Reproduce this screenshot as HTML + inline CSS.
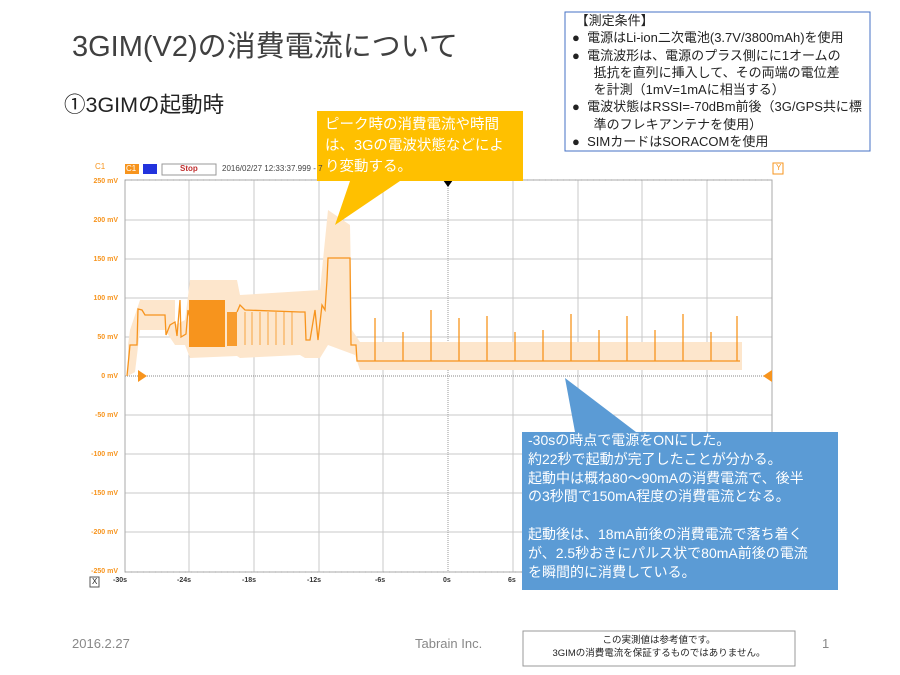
<!DOCTYPE html>
<html><head><meta charset="utf-8">
<style>
body{margin:0;width:900px;height:675px;background:#fff;position:relative;overflow:hidden;font-family:"Liberation Sans","Noto Sans CJK JP",sans-serif;}
.a{position:absolute;white-space:nowrap;}
svg{position:absolute;left:0;top:0;}
</style></head><body>
<svg width="900" height="675" viewBox="0 0 900 675">
  <g stroke="#c8c8c8" stroke-width="1">
    <line x1="189" y1="180" x2="189" y2="572"/><line x1="254" y1="180" x2="254" y2="572"/>
    <line x1="319" y1="180" x2="319" y2="572"/><line x1="383" y1="180" x2="383" y2="572"/>
    <line x1="513" y1="180" x2="513" y2="572"/><line x1="578" y1="180" x2="578" y2="572"/>
    <line x1="642" y1="180" x2="642" y2="572"/><line x1="707" y1="180" x2="707" y2="572"/>
    <line x1="125" y1="220" x2="772" y2="220"/><line x1="125" y1="259" x2="772" y2="259"/>
    <line x1="125" y1="298" x2="772" y2="298"/><line x1="125" y1="337" x2="772" y2="337"/>
    <line x1="125" y1="415" x2="772" y2="415"/><line x1="125" y1="454" x2="772" y2="454"/>
    <line x1="125" y1="493" x2="772" y2="493"/><line x1="125" y1="532" x2="772" y2="532"/>
  </g>
  <line x1="448" y1="180" x2="448" y2="572" stroke="#999" stroke-dasharray="1,1"/>
  <line x1="125" y1="376" x2="772" y2="376" stroke="#888" stroke-dasharray="1,1"/>
  <rect x="125" y="180" width="647" height="392" fill="none" stroke="#aaa"/>
  <g stroke="#999"><path d="M125 572 H772 M125 180 H772" stroke-dasharray="1,5"/></g>
  <path d="M128 345 L130 330 L140 300 L175 300 L175 325 L185 320 L190 280 L237 280 L240 295 L320 290 L328 210 L350 225 L352 330 L360 342 L742 342 L742 370 L360 370 L355 355 L328 345 L320 358 L305 358 L300 355 L240 358 L237 356 L190 358 L185 345 L175 345 L165 330 L140 330 L135 372 L128 376 Z" fill="#fde6cc"/>
  <path d="M127 376 L130 345 L137 345 L138 309 L142 310 L145 315 L165 315 L166 335 L170 325 L175 322 L177 336 L180 300 L181 337 L186 334 L188 310 L190 318 M237 312 L240 305 L245 310 L300 312 L305 312 L306 340 L310 340 L315 310 L318 340 L322 305 L325 310 L327 280 L328 258 L350 258 L351 345 L356 345 L357 361 L740 361" fill="none" stroke="#f7941d" stroke-width="1.3"/>
  <rect x="189" y="300" width="36" height="47" fill="#f7941d"/>
  <rect x="227" y="312" width="10" height="34" fill="#f7941d" opacity=".9"/>
  <g stroke="#f7941d" stroke-width="1" opacity=".8">
    <path d="M245 312V345M252 312V345M260 312V345M268 312V345M276 312V345M284 312V345M292 312V345"/>
  </g>
  <g stroke="#f7941d" stroke-width="1.3">
    <path d="M375 361V318 M403 361V332 M431 361V310 M459 361V318 M487 361V316 M515 361V332 M543 361V330 M571 361V314 M599 361V330 M627 361V316 M655 361V330 M683 361V314 M711 361V332 M737 361V316"/>
  </g>
  <path d="M138 370 L147 376 L138 382 Z" fill="#f7941d"/>
  <path d="M772 370 L763 376 L772 382 Z" fill="#f7941d"/>
  <path d="M443 180 L453 180 L448 187 Z" fill="#000"/>
  <rect x="125" y="164" width="14" height="10" fill="#f7941d"/>
  <rect x="143" y="164" width="14" height="10" fill="#2233dd"/>
  <rect x="162" y="164" width="54" height="11" fill="#fff" stroke="#999"/>
  <rect x="773" y="163" width="10" height="11" fill="#fff" stroke="#f7941d"/>
  <path d="M317 111 H523 V181 H400 L335 225 L350 181 H317 Z" fill="#ffc000"/>
  <path d="M522 432 H838 V590 H522 Z M575 432 L565 378 L636 432 Z" fill="#5b9bd5"/>
  <rect x="565" y="12" width="305" height="139" fill="#fff" stroke="#4472c4"/>
  <rect x="523" y="631" width="272" height="35" fill="#fff" stroke="#999"/>
  <rect x="90" y="577" width="9" height="10" fill="#fff" stroke="#555"/>
</svg>
<div class="a" style="left:72px;top:23px;font-size:29px;color:#404040;">3GIM(V2)の消費電流について</div>
<div class="a" style="left:64px;top:88px;font-size:21.5px;color:#222;">①3GIMの起動時</div>
<div class="a" style="left:325px;top:115px;font-size:14.5px;line-height:21px;color:#fff;">ピーク時の消費電流や時間<br>は、3Gの電波状態などによ<br>り変動する。</div>
<div class="a" style="left:528px;top:431px;font-size:14px;line-height:18.8px;color:#fff;">-30sの時点で電源をONにした。<br>約22秒で起動が完了したことが分かる。<br>起動中は概ね80～90mAの消費電流で、後半<br>の3秒間で150mA程度の消費電流となる。<br><br>起動後は、18mA前後の消費電流で落ち着く<br>が、2.5秒おきにパルス状で80mA前後の電流<br>を瞬間的に消費している。</div>
<div class="a" style="left:572px;top:12px;font-size:13px;line-height:17.3px;color:#222;">&nbsp;【測定条件】<br>●&nbsp; 電源はLi-ion二次電池(3.7V/3800mAh)を使用<br>●&nbsp; 電流波形は、電源のプラス側にに1オームの<br>&nbsp;&nbsp;&nbsp;&nbsp;&nbsp; 抵抗を直列に挿入して、その両端の電位差<br>&nbsp;&nbsp;&nbsp;&nbsp;&nbsp; を計測（1mV=1mAに相当する）<br>●&nbsp; 電波状態はRSSI=-70dBm前後（3G/GPS共に標<br>&nbsp;&nbsp;&nbsp;&nbsp;&nbsp; 準のフレキアンテナを使用）<br>●&nbsp; SIMカードはSORACOMを使用</div>
<div class="a" style="left:95px;top:162px;font-size:8px;color:#f7941d;">C1</div>
<div class="a" style="left:126px;top:164px;font-size:8px;color:#fff;">C1</div>
<div class="a" style="left:180px;top:164px;font-size:8px;color:#c03030;font-weight:bold;">Stop</div>
<div class="a" style="left:222px;top:164px;font-size:8px;color:#444;">2016/02/27 12:33:37.999 - 7</div>
<div class="a" style="left:776px;top:163px;font-size:8px;color:#f7941d;">Y</div>
<div class="a" style="left:86px;top:162px;font-size:7px;font-weight:bold;line-height:39px;color:#f7941d;text-align:right;width:32px;">250 mV<br>200 mV<br>150 mV<br>100 mV<br>50 mV<br>0 mV<br>-50 mV<br>-100 mV<br>-150 mV<br>-200 mV<br>-250 mV</div>
<div class="a" style="left:92px;top:577px;font-size:8px;color:#222;">X</div>
<div class="a" style="left:113px;top:577px;font-size:7px;font-weight:bold;color:#333;">
<span style="position:absolute;left:0">-30s</span><span style="position:absolute;left:64px">-24s</span><span style="position:absolute;left:129px">-18s</span><span style="position:absolute;left:194px">-12s</span><span style="position:absolute;left:262px">-6s</span><span style="position:absolute;left:330px">0s</span><span style="position:absolute;left:395px">6s</span></div>
<div class="a" style="left:72px;top:636px;font-size:13px;color:#888;">2016.2.27</div>
<div class="a" style="left:415px;top:636px;font-size:13px;color:#888;">Tabrain Inc.</div>
<div class="a" style="left:523px;top:634px;width:272px;text-align:center;font-size:9.5px;line-height:13px;color:#222;">この実測値は参考値です。<br>3GIMの消費電流を保証するものではありません。</div>
<div class="a" style="left:822px;top:636px;font-size:13px;color:#888;">1</div>
</body></html>
